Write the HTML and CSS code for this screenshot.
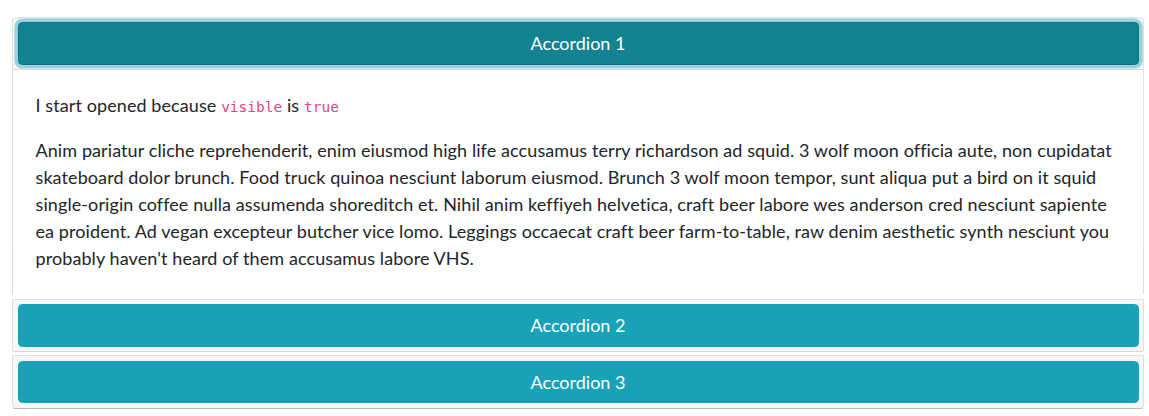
FILE: index.html
```html
<!DOCTYPE html>
<html lang="en">
<head>
<meta charset="utf-8">
<title>Accordion</title>
<link rel="stylesheet" href="styles.css">
</head>
<body>
<div class="page">
  <div class="accordion">
    <div class="card">
      <header class="card-header">
        <button class="btn btn-info active">Accordion 1</button>
      </header>
      <div class="card-body">
        <p class="card-text">I start opened because <code>visible</code> is <code>true</code></p>
        <p class="card-text">Anim pariatur cliche reprehenderit, enim eiusmod high life accusamus terry richardson ad squid. 3 wolf moon officia aute, non cupidatat<br>skateboard dolor brunch. Food truck quinoa nesciunt laborum eiusmod. Brunch 3 wolf moon tempor, sunt aliqua put a bird on it squid<br>single-origin coffee nulla assumenda shoreditch et. Nihil anim keffiyeh helvetica, craft beer labore wes anderson cred nesciunt sapiente<br>ea proident. Ad vegan excepteur butcher vice lomo. Leggings occaecat craft beer farm-to-table, raw denim aesthetic synth nesciunt you<br>probably haven't heard of them accusamus labore VHS.</p>
      </div>
    </div>
    <div class="card">
      <header class="card-header">
        <button class="btn btn-info">Accordion 2</button>
      </header>
    </div>
    <div class="card">
      <header class="card-header">
        <button class="btn btn-info">Accordion 3</button>
      </header>
    </div>
  </div>
</div>
</body>
</html>
```
FILE: styles.css
```css
* { box-sizing: border-box; }
html, body { margin: 0; padding: 0; background: #fff; }
body {
  font-family: Lato, "Noto Sans", sans-serif;
  font-size: 18px;
  line-height: 1.5;
  color: #212529;
}
.page {
  padding: 16.75px 5px 0 12px;
}
.accordion {
  display: flex;
  flex-direction: column;
}
.card {
  display: flex;
  flex-direction: column;
  background: #fff;
  border: 1px solid rgba(0,0,0,.125);
  margin-bottom: 4.25px;
}
.card:first-child {
  border-radius: 4.5px 4.5px 0 0;
}
.card:not(:last-child) {
  border-bottom: 0;
}
.card:last-child {
  border-radius: 0 0 4.5px 4.5px;
}
.card-header {
  padding: 4.5px;
  background: rgba(0,0,0,.03);
  border-bottom: 1px solid rgba(0,0,0,.125);
  margin-bottom: -1px;
}
.btn {
  display: block;
  width: 100%;
  font-family: inherit;
  font-size: 18px;
  line-height: 1.5;
  padding: 6.75px 13.5px;
  border-radius: 4.5px;
  text-align: center;
  cursor: pointer;
}
.btn-info {
  color: #fff;
  background: #17a2b8;
  border: 1px solid #17a2b8;
}
.btn-info.active {
  background: #138391;
  border-color: #10707f;
  box-shadow: 0 0 0 3.6px rgba(58,176,195,.5);
}
.card-body {
  padding: 22.5px;
}
.card-text {
  margin: 0 0 18px;
  white-space: nowrap;
  letter-spacing: 0.09px;
}
.card-text:last-child {
  margin-bottom: 0;
}
code {
  font-family: "DejaVu Sans Mono", "Liberation Mono", monospace;
  font-size: 14.5px;
  color: #e83e8c;
  letter-spacing: 0;
}
```
